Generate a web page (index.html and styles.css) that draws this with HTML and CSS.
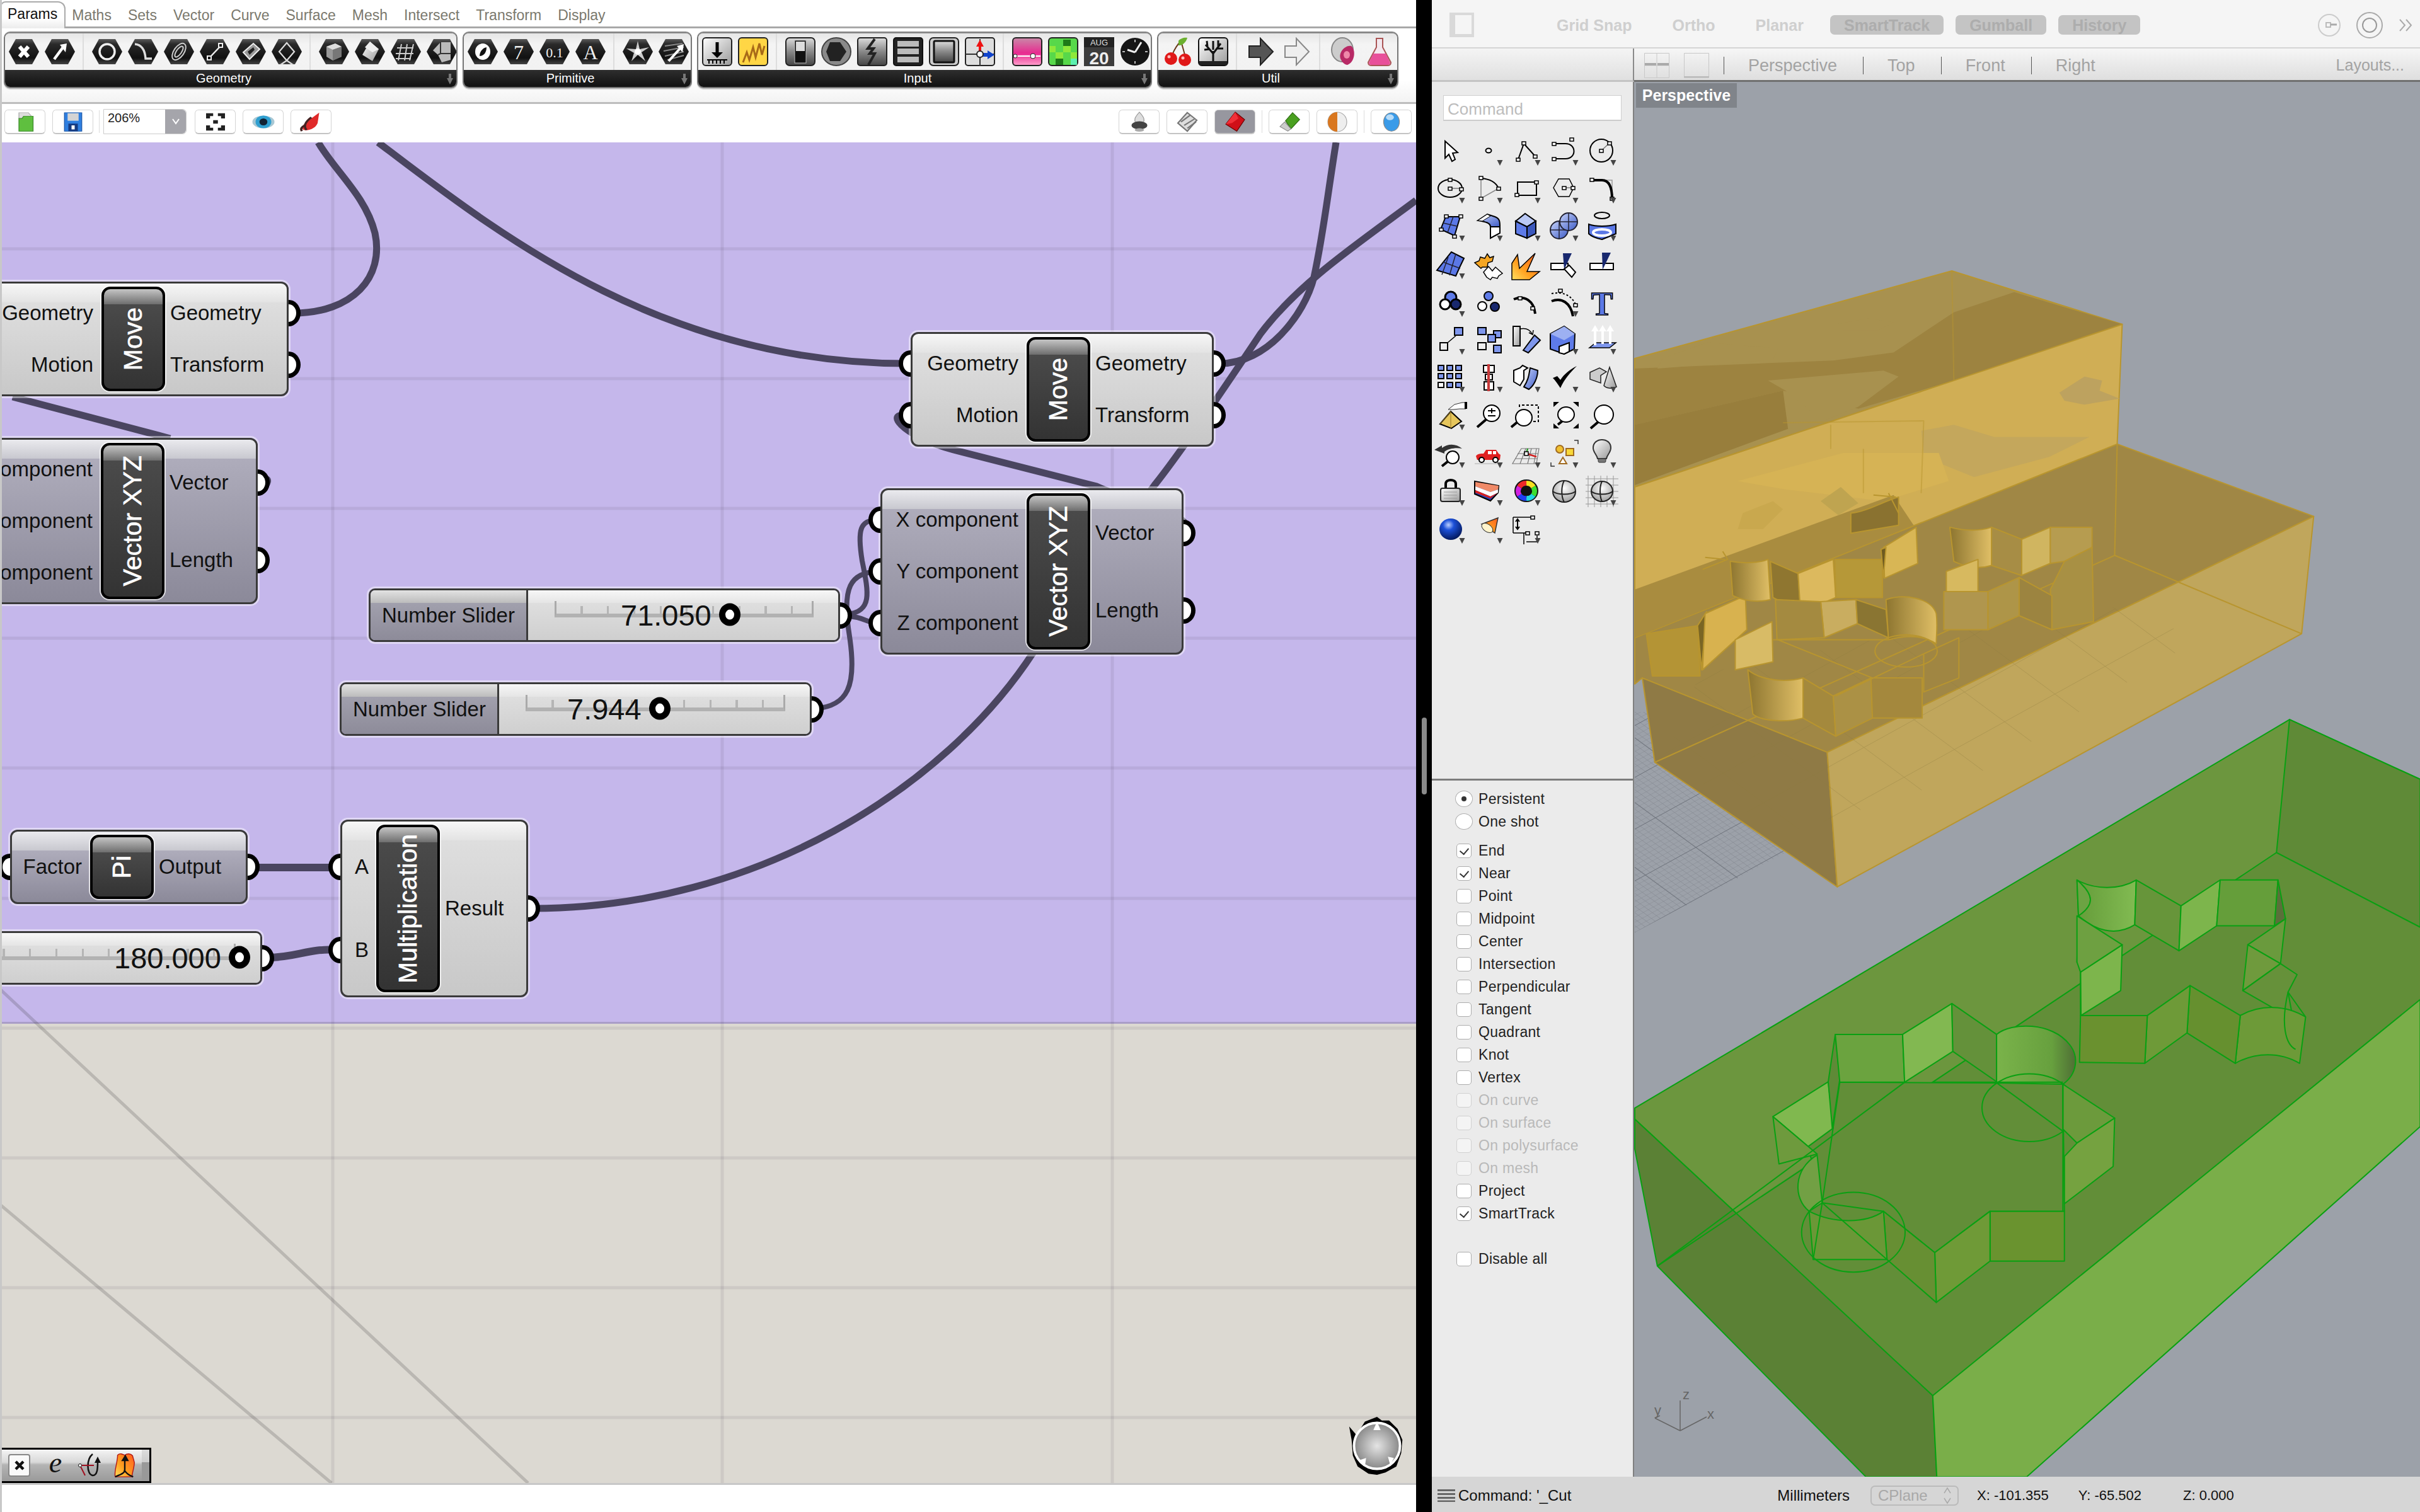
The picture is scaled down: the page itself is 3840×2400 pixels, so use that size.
FILE: index.html
```html
<!DOCTYPE html>
<html lang="en">
<head>
<meta charset="utf-8">
<title>Grasshopper and Rhino</title>
<link rel="stylesheet" href="styles.css">
</head>
<body>
<svg class="defs" width="0" height="0" aria-hidden="true">
  <defs>
    <path id="t" d="M43.5 44h9l-4.5 9z" fill="#454545"/>
    <path id="hexo" d="M11 1H37L48 21 37 41H11L0 21Z"/>
    <linearGradient id="gHex" x1="0" y1="0" x2="0" y2="1"><stop offset="0" stop-color="#5a5a5a"/><stop offset=".2" stop-color="#2a2a2a"/><stop offset=".75" stop-color="#111"/><stop offset="1" stop-color="#444"/></linearGradient>
    <linearGradient id="gGray" x1="0" y1="0" x2="0" y2="1"><stop offset="0" stop-color="#ddd"/><stop offset=".5" stop-color="#888"/><stop offset="1" stop-color="#444"/></linearGradient>
    <linearGradient id="gLight" x1="0" y1="0" x2="1" y2="1"><stop offset="0" stop-color="#fff"/><stop offset="1" stop-color="#999"/></linearGradient>
    <linearGradient id="gBlue" x1="0" y1="0" x2="1" y2="1"><stop offset="0" stop-color="#c8d4fa"/><stop offset="1" stop-color="#3e5cc8"/></linearGradient>
    <linearGradient id="gOrange" x1="1" y1="0" x2="0" y2="1"><stop offset="0" stop-color="#ff5a1f"/><stop offset=".6" stop-color="#ffa020"/><stop offset="1" stop-color="#ffe060"/></linearGradient>
    <linearGradient id="gPink" x1="0" y1="0" x2="0" y2="1"><stop offset="0" stop-color="#c98aa8"/><stop offset=".55" stop-color="#e82a90"/><stop offset="1" stop-color="#ffa0cc"/></linearGradient>
    <radialGradient id="gDial" cx=".5" cy=".5" r=".5"><stop offset="0" stop-color="#e4e4e4"/><stop offset="1" stop-color="#888"/></radialGradient>
    <radialGradient id="gBall" cx=".4" cy=".3" r=".7"><stop offset="0" stop-color="#bcd0ff"/><stop offset=".35" stop-color="#1c50d8"/><stop offset="1" stop-color="#041a60"/></radialGradient>
    <radialGradient id="gGlobe" cx=".5" cy=".35" r=".7"><stop offset="0" stop-color="#fff"/><stop offset="1" stop-color="#999"/></radialGradient>
    <linearGradient id="cyl1" x1="0" x2="1" y1="0" y2="0"><stop offset="0" stop-color="#7ab34a"/><stop offset=".7" stop-color="#67a03e"/><stop offset="1" stop-color="#4f6f35"/></linearGradient>
    <linearGradient id="cyl2" x1="0" x2="1" y1="0" y2="0"><stop offset="0" stop-color="#659c3a"/><stop offset="1" stop-color="#82bb52"/></linearGradient>
    <linearGradient id="cyl3" x1="0" x2="1" y1="0" y2="0"><stop offset="0" stop-color="#8d7530"/><stop offset="1" stop-color="#e0bf66"/></linearGradient>
    <pattern id="gridMajor" patternUnits="userSpaceOnUse" width="100" height="100" patternTransform="matrix(.8 -.44 .64 .47 2594 1480)"><path d="M0 0H100M0 0V100" stroke="#71767f" stroke-width="2.6" fill="none"/></pattern>
    <pattern id="gridMinor" patternUnits="userSpaceOnUse" width="10" height="10" patternTransform="matrix(.8 -.44 .64 .47 2594 1480)"><path d="M0 0H10M0 0V10" stroke="#868a92" stroke-width="1.4" fill="none"/></pattern>
    <pattern id="gridOver" patternUnits="userSpaceOnUse" width="100" height="100" patternTransform="matrix(1 -.69 .8 .74 0 0)"><path d="M0 0H100M0 0V100" stroke="#8f7a3f" stroke-width="1.6" fill="none" opacity=".45"/></pattern>
  </defs>
</svg>

<div class="gh">
  <nav class="gh-tabs">
    <span class="gh-tab gh-tab-on">Params</span>
    <span class="gh-tab">Maths</span><span class="gh-tab">Sets</span><span class="gh-tab">Vector</span><span class="gh-tab">Curve</span><span class="gh-tab">Surface</span><span class="gh-tab">Mesh</span><span class="gh-tab">Intersect</span><span class="gh-tab">Transform</span><span class="gh-tab">Display</span>
  </nav>

  <div class="ribbon">
    <section class="panel p-geo">
      <div class="panel-icons">
        <svg class="pi" viewBox="0 0 48 42"><use href="#hexo" fill="url(#gHex)"/><path d="M17 13 31 29M31 13 17 29" stroke="#fff" stroke-width="6" fill="none"/></svg>
        <svg class="pi" viewBox="0 0 48 42"><use href="#hexo" fill="url(#gHex)"/><path d="M15 33 29 14" stroke="#fff" stroke-width="4.5"/><path d="M24 10 35 8 33 22Z" fill="#fff"/></svg>
        <i class="pgap"></i>
        <svg class="pi" viewBox="0 0 48 42"><use href="#hexo" fill="url(#gHex)"/><ellipse cx="24" cy="21" rx="12" ry="12" fill="none" stroke="#eee" stroke-width="3.5"/></svg>
        <svg class="pi" viewBox="0 0 48 42"><use href="#hexo" fill="url(#gHex)"/><path d="M11 9C22 10 27 18 28 32H38" fill="none" stroke="#ddd" stroke-width="3.5"/></svg>
        <svg class="pi" viewBox="0 0 48 42"><use href="#hexo" fill="url(#gHex)"/><g fill="none" stroke="#ccc" stroke-width="2"><ellipse cx="24" cy="21" rx="8" ry="15" transform="rotate(35 24 21)"/><ellipse cx="24" cy="21" rx="4" ry="10" transform="rotate(35 24 21)"/></g></svg>
        <svg class="pi" viewBox="0 0 48 42"><use href="#hexo" fill="url(#gHex)"/><path d="M15 31 33 12" stroke="#eee" stroke-width="2.5"/><rect x="12" y="28" width="6" height="6" fill="#111" stroke="#eee" stroke-width="2"/><rect x="30" y="8" width="6" height="6" fill="#111" stroke="#eee" stroke-width="2"/></svg>
        <svg class="pi" viewBox="0 0 48 42"><use href="#hexo" fill="url(#gHex)"/><path d="M12 22 28 8 38 17 22 33Z" fill="#999" stroke="#eee" stroke-width="2"/><path d="M19 21 28 14 30 18 22 26Z" fill="#222"/></svg>
        <svg class="pi" viewBox="0 0 48 42"><use href="#hexo" fill="url(#gHex)"/><path d="M24 7 36 21 24 35 12 21ZM24 35 14 42M24 35 34 42" fill="none" stroke="#ddd" stroke-width="2.2"/></svg>
        <i class="pgap"></i>
        <svg class="pi" viewBox="0 0 48 42"><use href="#hexo" fill="url(#gHex)"/><path d="M12 13 26 8 36 13 36 29 22 35 12 29Z" fill="#999"/><path d="M12 13 26 8 36 13 22 18Z" fill="#ddd"/><path d="M22 18 36 13V29L22 35Z" fill="#777"/></svg>
        <svg class="pi" viewBox="0 0 48 42"><use href="#hexo" fill="url(#gHex)"/><path d="M24 5 38 17 28 36 12 26Z" fill="url(#gLight)"/><path d="M24 5 38 17 28 22 16 14Z" fill="#eee"/></svg>
        <svg class="pi" viewBox="0 0 48 42"><use href="#hexo" fill="url(#gHex)"/><path d="M10 15H36M8 24H36M8 32H32M17 9 12 35M26 9 22 35M36 9 30 35" stroke="#ccc" stroke-width="2" fill="none"/></svg>
        <svg class="pi" viewBox="0 0 48 42"><use href="#hexo" fill="url(#gHex)"/><path d="M10 19 22 6H38V34L24 38 18 26Z" fill="#bbb"/><path d="M22 6V24M22 24H38M22 24 18 26" stroke="#333" stroke-width="2"/></svg>
      </div>
      <h3 class="panel-title">Geometry<svg class="more" viewBox="0 0 10 18"><path d="M3 0h4v7h3l-5 10-5-10h3z" fill="#777"/></svg></h3>
    </section>
    <section class="panel p-pri">
      <div class="panel-icons">
        <svg class="pi" viewBox="0 0 48 42"><use href="#hexo" fill="url(#gHex)"/><ellipse cx="24" cy="21" rx="12" ry="13" fill="#fff"/><path d="M19 28C19 21 24 15 30 14 30 22 26 28 19 28Z" fill="#111"/></svg>
        <svg class="pi" viewBox="0 0 48 42"><use href="#hexo" fill="url(#gHex)"/><text class="hx-t" x="24" y="33" font-size="32">7</text></svg>
        <svg class="pi" viewBox="0 0 48 42"><use href="#hexo" fill="url(#gHex)"/><text class="hx-t" x="24" y="30" font-size="22">0.1</text></svg>
        <svg class="pi" viewBox="0 0 48 42"><use href="#hexo" fill="url(#gHex)"/><text class="hx-t" x="24" y="33" font-size="32">A</text></svg>
        <i class="pgap"></i>
        <svg class="pi" viewBox="0 0 48 42"><use href="#hexo" fill="url(#gHex)"/><path d="M24 4 27 17 42 14 30 22 36 36 24 26 14 36 18 23 6 16 21 17Z" fill="#ccc"/><circle cx="24" cy="21" r="5" fill="#fff"/></svg>
        <svg class="pi" viewBox="0 0 48 42"><use href="#hexo" fill="url(#gHex)"/><path d="M10 12 38 8M8 20 40 14M10 28 40 21M14 34 40 27" stroke="#888" stroke-width="2"/><path d="M16 36 34 16" stroke="#fff" stroke-width="4"/><path d="M29 12 40 9 38 22Z" fill="#fff"/></svg>
      </div>
      <h3 class="panel-title">Primitive<svg class="more" viewBox="0 0 10 18"><path d="M3 0h4v7h3l-5 10-5-10h3z" fill="#777"/></svg></h3>
    </section>
    <section class="panel p-inp">
      <div class="panel-icons">
        <svg class="pi pi-q" viewBox="0 0 48 46"><rect x="1" y="1" width="46" height="44" rx="5" fill="url(#gLight)" stroke="#222" stroke-width="2"/><path d="M24 8V26" stroke="#000" stroke-width="5"/><path d="M15 24H33L24 33Z" fill="#000"/><path d="M8 36H40M11 36V42M17 36V42M23 36V42M29 36V42M35 36V42" stroke="#000" stroke-width="2"/></svg>
        <svg class="pi pi-q" viewBox="0 0 48 46"><rect x="1" y="1" width="46" height="44" rx="5" fill="#ffd645" stroke="#222" stroke-width="2"/><path d="M8 40 14 24 18 36 24 16 28 32 34 10 38 28 42 14" fill="none" stroke="#a86a18" stroke-width="3"/></svg>
        <i class="pgap"></i>
        <svg class="pi pi-q" viewBox="0 0 48 46"><rect x="1" y="1" width="46" height="44" rx="6" fill="url(#gGray)" stroke="#222" stroke-width="2"/><rect x="15" y="5" width="18" height="36" fill="#111" stroke="#bbb"/><rect x="17" y="7" width="14" height="15" fill="#ddd"/></svg>
        <svg class="pi pi-q" viewBox="0 0 48 46"><ellipse cx="24" cy="23" rx="23" ry="22" fill="#8a8a8a" stroke="#444" stroke-width="2"/><path d="M14 8H30L40 23 30 38H14L8 23Z" fill="#222"/></svg>
        <svg class="pi pi-q" viewBox="0 0 48 46"><rect x="1" y="1" width="46" height="44" rx="4" fill="url(#gGray)" stroke="#222" stroke-width="2"/><path d="M28 3 17 18H26L20 26H28L18 44" fill="none" stroke="#222" stroke-width="4"/></svg>
        <svg class="pi pi-q" viewBox="0 0 48 46"><rect x="1" y="1" width="46" height="44" rx="4" fill="#222" stroke="#111" stroke-width="2"/><rect x="7" y="6" width="34" height="9" fill="#bbb"/><rect x="7" y="18" width="34" height="9" fill="#bbb"/><rect x="7" y="31" width="34" height="9" fill="#bbb"/></svg>
        <svg class="pi pi-q" viewBox="0 0 48 46"><rect x="1" y="1" width="46" height="44" rx="6" fill="#ccc" stroke="#222" stroke-width="2"/><rect x="8" y="6" width="32" height="34" rx="2" fill="url(#gGray)" stroke="#111" stroke-width="3"/></svg>
        <svg class="pi pi-q" viewBox="0 0 48 46"><rect x="1" y="1" width="46" height="44" rx="4" fill="#ddd" stroke="#222" stroke-width="2"/><path d="M24 3V46M1 27H46" stroke="#333" stroke-width="2"/><path d="M24 4 30 15H26V26H22V15H18Z" fill="#e11"/><path d="M47 28 36 35V31H24V25H36V21Z" fill="#14c"/><circle cx="24" cy="27" r="5" fill="#fff" stroke="#222" stroke-width="2"/></svg>
        <i class="pgap"></i>
        <svg class="pi pi-q" viewBox="0 0 48 46"><rect x="1" y="1" width="46" height="44" rx="5" fill="url(#gPink)" stroke="#222" stroke-width="2"/><path d="M3 30H45" stroke="#fff" stroke-width="2"/><circle cx="5" cy="30" r="3" fill="#fff" stroke="#222"/><circle cx="33" cy="30" r="4" fill="#fff" stroke="#222"/></svg>
        <svg class="pi pi-q" viewBox="0 0 48 46"><rect x="1" y="1" width="46" height="44" rx="5" fill="#57d84a" stroke="#222" stroke-width="2"/><path d="M2 14H12V24H2ZM24 14H36V24H24ZM12 24H24V34H12ZM36 24H46V34H36Z" fill="#8fe83a"/><path d="M12 34H24V44H12ZM24 4H36V14H24Z" fill="#1e7a18"/><path d="M36 34H46V44H36Z" fill="#5cf0b0"/></svg>
        <svg class="pi pi-q" viewBox="0 0 48 46"><rect width="48" height="46" fill="#222"/><rect y="16" width="48" height="30" fill="#3c3c3c"/><text class="cal-m" x="24" y="13">AUG</text><text class="cal-d" x="24" y="43">20</text></svg>
        <svg class="pi pi-q" viewBox="0 0 48 46"><ellipse cx="24" cy="23" rx="23" ry="22" fill="#161616"/><path d="M24 24 34 8M24 24 12 20" stroke="#eee" stroke-width="3"/><path d="M24 4V8M24 38V42M4 23H8M40 23H44" stroke="#bbb" stroke-width="2"/></svg>
      </div>
      <h3 class="panel-title">Input<svg class="more" viewBox="0 0 10 18"><path d="M3 0h4v7h3l-5 10-5-10h3z" fill="#777"/></svg></h3>
    </section>
    <section class="panel p-uti">
      <div class="panel-icons">
        <svg class="pi pi-q" viewBox="0 0 48 46"><path d="M16 28C20 18 24 12 30 6M36 28C34 20 32 14 30 6" fill="none" stroke="#6a3a1a" stroke-width="2"/><path d="M26 6C28 2 36 0 40 1 38 8 32 14 26 13Z" fill="#6cb030"/><circle cx="14" cy="34" r="10" fill="#e01818"/><circle cx="36" cy="36" r="10" fill="#e01818"/><circle cx="11" cy="31" r="2.5" fill="#fbb"/><circle cx="33" cy="33" r="2.5" fill="#fbb"/></svg>
        <svg class="pi pi-q" viewBox="0 0 48 46"><rect x="1" y="1" width="46" height="44" rx="5" fill="url(#gLight)" stroke="#111" stroke-width="2"/><path d="M24 42V22M24 26 12 12M24 26 36 10M24 20V6M18 19 10 20M30 18 40 18M15 15 14 6M32 14 32 5" stroke="#111" stroke-width="3"/><rect x="2" y="38" width="44" height="6" fill="#222"/></svg>
        <i class="pgap"></i>
        <svg class="pi pi-q" viewBox="0 0 48 46"><path d="M6 14H24V2L44 23 24 44V32H6Z" fill="#555" stroke="#222" stroke-width="2"/></svg>
        <svg class="pi pi-q" viewBox="0 0 48 46"><path d="M6 14H24V2L44 23 24 44V32H6Z" fill="#eee" stroke="#888" stroke-width="2"/></svg>
        <i class="pgap"></i>
        <svg class="pi pi-q" viewBox="0 0 48 46"><ellipse cx="22" cy="20" rx="17" ry="19" fill="#ccc" stroke="#888" stroke-width="2"/><path d="M20 36C14 26 26 12 36 14 44 20 42 40 30 44 26 44 22 40 20 36Z" fill="#b82a66"/><ellipse cx="29" cy="28" rx="5" ry="6" fill="#e8a"/></svg>
        <svg class="pi pi-q" viewBox="0 0 48 46"><path d="M19 2H29V16L42 40C42 44 40 45 36 45H12C8 45 6 44 6 40L19 16Z" fill="#f3e8ee" stroke="#a55" stroke-width="2"/><path d="M14 26H34L41 41C40 44 38 44 36 44H12C10 44 8 44 7 41Z" fill="#e8509a"/></svg>
      </div>
      <h3 class="panel-title">Util<svg class="more" viewBox="0 0 10 18"><path d="M3 0h4v7h3l-5 10-5-10h3z" fill="#777"/></svg></h3>
    </section>
  </div>

  <div class="canvas-bar">
    <button class="tb-btn"><svg viewBox="0 0 40 36" preserveAspectRatio="none"><path d="M12 2H24L28 8V12H12Z" fill="#ddd" stroke="#aaa"/><path d="M12 12H16L18 8H30V34H12Z" fill="#5fbf3f" stroke="#3a8a2a"/></svg></button>
    <button class="tb-btn"><svg viewBox="0 0 40 36" preserveAspectRatio="none"><path d="M9 2H31V34H9Z" fill="#2f7fe0" stroke="#1a55a5"/><rect x="13" y="3" width="14" height="13" fill="#d4d4d4"/><rect x="14" y="21" width="12" height="13" fill="#163a80"/><rect x="18" y="24" width="4" height="7" fill="#fff"/></svg></button>
    <i class="tb-sep tb-sep-l"></i>
    <div class="zoom-sel"><span class="zoom-val">206%</span><span class="zoom-arrow"><svg viewBox="0 0 14 10" width="14" height="10"><path d="M2 1 7 8 12 1" fill="none" stroke="#fff" stroke-width="2"/></svg></span></div>
    <button class="tb-btn"><svg viewBox="0 0 40 36" preserveAspectRatio="none"><path d="M8 3H17V8H13V12H8ZM23 3H32V12H27V8H23ZM8 24H13V28H17V33H8ZM27 24H32V33H23V28H27Z" fill="#222"/><rect x="17" y="15" width="6" height="6" fill="#222"/></svg></button>
    <button class="tb-btn"><svg viewBox="0 0 40 36" preserveAspectRatio="none"><ellipse cx="20" cy="18" rx="14" ry="11" fill="#a9c8d4"/><ellipse cx="20" cy="18" rx="10" ry="11" fill="#2f9fd0"/><ellipse cx="20" cy="18" rx="5" ry="6" fill="#123"/></svg></button>
    <button class="tb-btn"><svg viewBox="0 0 40 36" preserveAspectRatio="none"><path d="M10 32C6 26 12 20 18 14L30 2 28 20C26 28 18 34 10 32Z" fill="#e02a2a"/><path d="M14 32C10 26 12 18 20 10" fill="none" stroke="#422" stroke-width="3"/><path d="M8 34C6 30 8 26 12 24" fill="none" stroke="#422" stroke-width="3"/></svg></button>
    <div class="tb-right">
      <button class="tb-btn"><svg viewBox="0 0 40 36" preserveAspectRatio="none"><path d="M20 1C14 10 13 14 15 20H25C27 14 26 10 20 1Z" fill="#ddd" stroke="#999"/><ellipse cx="20" cy="24" rx="10" ry="7" fill="#444"/><ellipse cx="20" cy="32" rx="6" ry="3" fill="#aaa"/></svg></button>
      <button class="tb-btn"><svg viewBox="0 0 40 36" preserveAspectRatio="none"><path d="M20 2 32 15 20 34 8 20Z" fill="#ddd" stroke="#777" stroke-width="2"/><path d="M12 18 24 6M16 24 29 13M20 29 31 18" stroke="#777" stroke-width="2"/></svg></button>
      <button class="tb-btn tb-on"><svg viewBox="0 0 40 36" preserveAspectRatio="none"><path d="M20 1 32 14 22 34 8 22Z" fill="#d00f18" stroke="#600"/><path d="M20 1 24 12 16 20 8 22Z" fill="#f03038"/></svg></button>
      <i class="tb-sep"></i>
      <button class="tb-btn"><svg viewBox="0 0 40 36" preserveAspectRatio="none"><path d="M24 2 33 14 22 30 15 16Z" fill="#4aa020" stroke="#2a6a10"/><path d="M14 18 22 30 18 34 8 26Z" fill="#ccc" stroke="#888"/></svg></button>
      <button class="tb-btn"><svg viewBox="0 0 40 36" preserveAspectRatio="none"><ellipse cx="20" cy="18" rx="12" ry="17" fill="#eee" stroke="#aaa"/><path d="M20 1C13 1 8 9 8 18S13 35 20 35Z" fill="#d9771f"/></svg></button>
      <i class="tb-sep"></i>
      <button class="tb-btn"><svg viewBox="0 0 40 36" preserveAspectRatio="none"><ellipse cx="20" cy="18" rx="10" ry="16" fill="#3a9be8" stroke="#888"/><ellipse cx="18" cy="10" rx="5" ry="5" fill="#b8dcf8"/></svg></button>
    </div>
  </div>

  <main class="canvas">
    <svg class="wires" viewBox="0 226 2247 2128">
      <g class="gridl">
        <path d="M528 226V2354M1146 226V2354M1765 226V2354"/>
        <path d="M0 395H2247M0 601H2247M0 807H2247M0 1013H2247M0 1219H2247M0 1426H2247M0 1632H2247M0 1838H2247M0 2044H2247M0 2250H2247"/>
      </g>
      <path class="diag" d="M0 1570 838 2354M0 1912 526 2354"/>
      <g class="wire">
        <path d="M465 497C560 497 610 440 595 370 580 310 530 270 505 226"/>
        <path d="M600 226C790 370 1050 577 1438 577"/>
        <path d="M20 630 270 696"/>
        <path d="M1440 662C1405 650 1425 690 1513 714L1740 772C1800 800 1905 815 1880 850"/>
        <path d="M845 1442C1200 1442 1500 1250 1640 1035L1832 770C1880 710 1960 590 2000 530 2060 450 2150 390 2247 318"/>
        <path d="M1936 577C2010 577 2070 500 2085 440 2100 370 2105 320 2120 226"/>
        <path class="thin" d="M1345 975C1385 970 1378 940 1368 890 1360 840 1365 826 1392 825"/>
        <path class="thin" d="M1294 1125C1345 1120 1360 1090 1348 1010 1335 930 1350 910 1392 907"/>
        <path class="thin" d="M1340 978C1370 978 1375 989 1392 989"/>
        <path d="M405 763C435 752 425 770 412 780"/>
        <path class="thick" d="M400 1377H532"/>
        <path class="thick" d="M425 1520C470 1520 490 1505 532 1508"/>
      </g>
    </svg>

    <article class="node move n-move1">
      <div class="col-in col-move"><div class="row">Geometry</div><div class="row">Motion</div></div>
      <div class="pill"><span>Move</span></div>
      <div class="col-out"><div class="row">Geometry<b class="port port-r"></b></div><div class="row">Transform<b class="port port-r"></b></div></div>
    </article>
    <article class="node vec dark n-vec1">
      <div class="col-in col-vec"><div class="row">X component</div><div class="row">Y component</div><div class="row">Z component</div></div>
      <div class="pill"><span>Vector XYZ</span></div>
      <div class="col-out"><div class="row">Vector<b class="port port-r"></b></div><div class="row">Length<b class="port port-r"></b></div></div>
    </article>
    <article class="node move n-move2">
      <div class="col-in col-move"><div class="row"><b class="port port-l"></b>Geometry</div><div class="row"><b class="port port-l"></b>Motion</div></div>
      <div class="pill"><span>Move</span></div>
      <div class="col-out"><div class="row">Geometry<b class="port port-r"></b></div><div class="row">Transform<b class="port port-r"></b></div></div>
    </article>
    <article class="node vec dark n-vec2">
      <div class="col-in col-vec"><div class="row"><b class="port port-l"></b>X component</div><div class="row"><b class="port port-l"></b>Y component</div><div class="row"><b class="port port-l"></b>Z component</div></div>
      <div class="pill"><span>Vector XYZ</span></div>
      <div class="col-out"><div class="row">Vector<b class="port port-r"></b></div><div class="row">Length<b class="port port-r"></b></div></div>
    </article>
    <article class="node pi-node dark n-pi">
      <div class="col-in col-pi"><div class="row"><b class="port port-l"></b>Factor</div></div>
      <div class="pill"><span>Pi</span></div>
      <div class="col-out"><div class="row">Output<b class="port port-r"></b></div></div>
    </article>
    <article class="node mult n-mult">
      <div class="col-in col-mult"><div class="row"><b class="port port-l"></b>A</div><div class="row"><b class="port port-l"></b>B</div></div>
      <div class="pill"><span>Multiplication</span></div>
      <div class="col-out"><div class="row">Result<b class="port port-r"></b></div></div>
    </article>

    <article class="slider n-s1">
      <div class="s-label">Number Slider</div>
      <div class="s-track"><i class="s-rail"></i><div class="s-read r1"><span>71.050</span><i class="knob"></i></div></div>
      <b class="port port-r"></b>
    </article>
    <article class="slider n-s2">
      <div class="s-label">Number Slider</div>
      <div class="s-track"><i class="s-rail"></i><div class="s-read r2"><span>7.944</span><i class="knob"></i></div></div>
      <b class="port port-r"></b>
    </article>
    <article class="slider n-s3">
      <div class="s-label">Number Slider</div>
      <div class="s-track"><i class="s-rail"></i><div class="s-read r3"><span>180.000</span><i class="knob"></i></div></div>
      <b class="port port-r"></b>
    </article>

    <div class="widget">
      <button class="w-x"><svg viewBox="0 0 20 20" width="20" height="20"><path d="M4 4 16 16M16 4 4 16" stroke="#111" stroke-width="4.5"/></svg></button>
      <svg class="w-i w-first" viewBox="0 0 40 40"><text class="w-e" x="20" y="31">e</text></svg>
      <svg class="w-i" viewBox="0 0 40 40"><path d="M24 2C14 10 14 34 24 36 32 36 32 24 32 14" fill="none" stroke="#111" stroke-width="2.5"/><path d="M27 16 32 6 37 16Z" fill="#111"/><path d="M4 20H26M4 20 12 36" stroke="#a01020" stroke-width="2"/><circle cx="4" cy="20" r="2.5" fill="#fff" stroke="#111"/></svg>
      <svg class="w-i" viewBox="0 0 40 42"><path d="M8 4C12 0 16 2 20 4 24 1 30 1 33 5L36 16C36 24 32 34 32 40H4C2 30 8 16 8 4Z" fill="url(#gOrange)" stroke="#b01818" stroke-width="1.5"/><path d="M20 6V28C20 34 14 36 4 40M20 30C24 36 28 38 34 40" fill="none" stroke="#111" stroke-width="2.5"/><path d="M14 14 21 3 27 14Z" fill="#111"/></svg>
      <i class="w-end"></i>
    </div>
    <svg class="dial" viewBox="0 0 100 100"><path d="M50 2 58 8 70 8 84 22 92 40 90 62 82 84 64 94 50 98 36 96 18 84 10 66 8 40 4 18 16 32 30 10Z" fill="#000"/><circle cx="50" cy="50" r="38" fill="url(#gDial)" stroke="#fff" stroke-width="4"/><path d="M50 10 56 24 44 24ZM20 74 32 70 30 84ZM78 70 68 68 72 82Z" fill="#fff"/></svg>
  </main>
  <div class="gh-foot"></div>
</div>

<div class="divider"><i class="handle"></i></div>

<div class="rh">
  <header class="rh-top">
    <i class="side-tog"></i>
    <span class="tg tg-first">Grid Snap</span><span class="tg">Ortho</span><span class="tg">Planar</span>
    <span class="tg tg-on">SmartTrack</span><span class="tg tg-on tg-next">Gumball</span><span class="tg tg-on tg-next">History</span>
    <div class="rh-top-right">
      <svg viewBox="0 0 36 36" width="36" height="36"><circle cx="18" cy="18" r="17" fill="none" stroke="#ccc" stroke-width="2"/><rect x="13" y="14" width="7" height="7" fill="none" stroke="#bbb" stroke-width="2"/><path d="M20 17H30" stroke="#aaa" stroke-width="3"/></svg>
      <svg viewBox="0 0 42 42" width="42" height="42"><circle cx="21" cy="21" r="20" fill="none" stroke="#aaa" stroke-width="2"/><circle cx="21" cy="21" r="11" fill="none" stroke="#999" stroke-width="2"/></svg>
      <svg viewBox="0 0 24 22" width="24" height="22"><path d="M2 2 10 11 2 20M12 2 20 11 12 20" fill="none" stroke="#aaa" stroke-width="2"/></svg>
    </div>
  </header>
  <div class="rh-row">
    <div class="rh-row-side"></div>
    <nav class="vp-tabs">
      <svg class="vt-ic" viewBox="0 0 40 40" width="40" height="40"><path d="M.5.5H39.5V39.5H.5ZM20 0V40M0 20H40" fill="none" stroke="#c8c8c8"/><path d="M1 18H19M21 18H39" stroke="#aaa" stroke-width="4"/></svg>
      <svg class="vt-ic" viewBox="0 0 40 40" width="40" height="40"><path d="M.5.5H39.5V39.5H.5Z" fill="none" stroke="#c8c8c8"/><path d="M0 38H40" stroke="#bbb" stroke-width="2"/></svg>
      <span class="vt">Perspective</span><span class="vt">Top</span><span class="vt">Front</span><span class="vt">Right</span>
      <span class="vt-lay">Layouts...</span>
    </nav>
  </div>
  <div class="rh-main">
    <aside class="side">
      <div class="cmd">Command</div>
      <div class="tools">
        <svg viewBox="0 0 60 60"><path class="w" d="M21 14V41L27 35 32 46 37 43 33 33 41 32Z"/></svg>
        <svg viewBox="0 0 60 60"><ellipse class="w" cx="30" cy="29" rx="4.5" ry="3.5"/><use href="#t"/></svg>
        <svg viewBox="0 0 60 60"><path class="k" d="M17 43 26 18 44 38"/><rect class="s" x="14" y="41" width="6" height="5"/><rect class="s" x="23" y="15" width="6" height="5"/><rect class="s" x="41" y="36" width="6" height="5"/><use href="#t"/></svg>
        <svg viewBox="0 0 60 60"><path class="k" d="M16 18H32C50 18 50 42 32 42H16"/><rect class="s" x="11" y="16" width="6" height="5"/><rect class="s" x="39" y="9" width="6" height="5"/><rect class="s" x="11" y="40" width="6" height="5"/><use href="#t"/></svg>
        <svg viewBox="0 0 60 60"><circle class="k" cx="29" cy="29" r="18"/><path d="M29 29 42 17" stroke="#777" stroke-width="1.5"/><rect class="s" x="26" y="27" width="6" height="5"/><rect class="s" x="39" y="15" width="6" height="5"/><use href="#t"/></svg>

        <svg viewBox="0 0 60 60"><ellipse class="k" cx="29" cy="29" rx="19" ry="14"/><path d="M29 29H47" stroke="#777" stroke-width="1.5"/><rect class="s" x="26" y="13" width="6" height="5"/><rect class="s" x="26" y="27" width="6" height="5"/><rect class="s" x="44" y="28" width="6" height="5"/><use href="#t"/></svg>
        <svg viewBox="0 0 60 60"><path d="M18 13V45L46 29" fill="none" stroke="#888" stroke-width="1.5"/><path class="k" d="M18 13C32 14 42 20 46 29"/><rect class="s" x="15" y="10" width="6" height="5"/><rect class="s" x="43" y="27" width="6" height="5"/><rect class="s" x="15" y="43" width="6" height="5"/><use href="#t"/></svg>
        <svg viewBox="0 0 60 60"><rect class="k" x="16" y="19" width="30" height="21"/><rect class="s" x="12" y="37" width="6" height="5"/><rect class="s" x="43" y="17" width="6" height="5"/><use href="#t"/></svg>
        <svg viewBox="0 0 60 60"><path class="k k1" d="M13 28 21 14H38L45 28 38 42H21Z"/><path d="M30 28H44" stroke="#777" stroke-width="1.5"/><rect class="s" x="27" y="26" width="6" height="5"/><rect class="s" x="41" y="26" width="6" height="5"/><use href="#t"/></svg>
        <svg viewBox="0 0 60 60"><path d="M14 16H46V46" fill="none" stroke="#999" stroke-width="1.5"/><path class="k k3" d="M14 16H30C42 16 46 28 46 46"/><rect class="s" x="11" y="13" width="6" height="5"/><rect class="s" x="43" y="43" width="6" height="5"/><use href="#t"/></svg>

        <svg viewBox="0 0 60 60"><path class="b" d="M22 14H45L36 44 14 34Z"/><path d="M34 14 25 39M18 24 40 29" stroke="#223" stroke-width="1.5"/><rect class="s" x="20" y="11" width="6" height="5"/><rect class="s" x="43" y="11" width="6" height="5"/><rect class="s" x="33" y="43" width="6" height="5"/><rect class="s" x="12" y="32" width="6" height="5"/><use href="#t"/></svg>
        <svg viewBox="0 0 60 60"><path d="M13 20 28 10 40 14C48 17 48 22 48 30L33 30C33 24 26 22 13 20Z" fill="url(#gBlue)" stroke="#000" stroke-width="2"/><path class="w" d="M33 30H48V40L33 48Z"/><path d="M13 20 28 10 33 13 20 21Z" fill="#fff" stroke="#000"/><use href="#t"/></svg>
        <svg viewBox="0 0 60 60"><path d="M13 21 28 9 45 21 31 30Z" fill="#b9c8f5" stroke="#000" stroke-width="2"/><path d="M13 21 31 30V48L13 41Z" fill="#5e7be8" stroke="#000" stroke-width="2"/><path d="M31 30 45 21V41L31 48Z" fill="#3b58bd" stroke="#000" stroke-width="2"/><use href="#t"/></svg>
        <svg viewBox="0 0 60 60"><circle cx="22" cy="35" r="14" fill="url(#gBlue)" stroke="#223" stroke-width="2"/><path d="M22 21V49M8 35H36" stroke="#223" stroke-width="1.5"/><circle cx="37" cy="22" r="14" fill="url(#gBlue)" stroke="#223" stroke-width="2"/><path d="M37 8V36M23 22H51" stroke="#223" stroke-width="1.5"/><use href="#t"/></svg>
        <svg viewBox="0 0 60 60"><ellipse class="k" cx="30" cy="12" rx="12" ry="5"/><path class="b" d="M9 26C20 30 40 30 52 26V41C40 46 30 50 30 50 20 48 14 46 9 41Z"/><ellipse cx="30" cy="39" rx="14" ry="5" fill="none" stroke="#fff" stroke-width="4"/><use href="#t"/></svg>

        <svg viewBox="0 0 60 60"><path class="b" d="M8 39 31 10 51 20C46 30 44 34 38 48Z"/><path d="M18 26 45 36M26 18 16 46M38 13 28 47" stroke="#223" stroke-width="1.5" fill="none"/><use href="#t"/></svg>
        <svg viewBox="0 0 60 60"><path d="M30 33 36 40 41 34 52 44 46 48 44 52 36 50 33 54 27 50 22 42Z" fill="#fff" stroke="#000" stroke-width="1.5"/><path d="M8 27 15 24 17 18 24 20 28 13 32 19 38 17 36 25 29 27 28 34 20 34 18 36Z" fill="#f5a623" stroke="#000" stroke-width="1.5"/></svg>
        <svg viewBox="0 0 60 60"><path d="M7 54V28L16 14 19 36 44 12 31 41 51 41 35 54Z" fill="url(#gOrange)" stroke="#000" stroke-width="1.5"/></svg>
        <svg viewBox="0 0 60 60"><rect class="w" x="9" y="28" width="27" height="10"/><path d="M28 12H42L30 38Z" fill="#18286e"/><path class="w" d="M30 37 38 31 48 42 42 50Z"/></svg>
        <svg viewBox="0 0 60 60"><rect class="w" x="11" y="28" width="37" height="10"/><path d="M30 11H44L31 38Z" fill="#18286e"/></svg>

        <svg viewBox="0 0 60 60"><circle cx="30" cy="22" r="9" fill="#5e7be8" stroke="#000" stroke-width="3"/><circle cx="21" cy="33" r="8" fill="#fff" stroke="#000" stroke-width="3"/><circle cx="38" cy="33" r="8" fill="#18286e" stroke="#000" stroke-width="3"/><use href="#t"/></svg>
        <svg viewBox="0 0 60 60"><circle cx="30" cy="20" r="7" fill="#5e7be8" stroke="#000" stroke-width="2"/><circle cx="20" cy="36" r="7" fill="#fff" stroke="#000" stroke-width="2"/><circle cx="40" cy="37" r="7" fill="#18286e" stroke="#000" stroke-width="2"/></svg>
        <svg viewBox="0 0 60 60"><path class="k k3" d="M10 25C28 18 42 28 44 48"/><rect class="s" x="17" y="21" width="6" height="5"/><rect class="s" x="37" y="37" width="6" height="5"/></svg>
        <svg viewBox="0 0 60 60"><path class="k k3" d="M10 28C26 22 40 30 44 52"/><path d="M10 16C30 12 44 20 50 38" fill="none" stroke="#000" stroke-width="2" stroke-dasharray="3 3"/><rect class="s" x="21" y="9" width="6" height="5"/><rect class="s" x="45" y="32" width="6" height="5"/><use href="#t"/></svg>
        <svg viewBox="0 0 60 60"><text class="ic-t" x="30" y="50">T</text></svg>

        <svg viewBox="0 0 60 60"><path class="k k1" d="M25 34 38 23"/><rect x="13" y="34" width="12" height="12" fill="#eee" stroke="#000" stroke-width="2"/><rect x="36" y="10" width="13" height="12" fill="#7e96ec" stroke="#000" stroke-width="2"/><use href="#t"/></svg>
        <svg viewBox="0 0 60 60"><rect x="13" y="10" width="13" height="11" fill="#7e96ec" stroke="#000" stroke-width="2"/><rect x="13" y="34" width="13" height="11" fill="#eee" stroke="#000" stroke-width="2"/><rect x="38" y="15" width="12" height="11" fill="#7e96ec" stroke="#000" stroke-width="2"/><rect x="29" y="21" width="12" height="12" fill="#7e96ec" stroke="#000" stroke-width="2"/><rect x="38" y="38" width="12" height="12" fill="#7e96ec" stroke="#000" stroke-width="2"/></svg>
        <svg viewBox="0 0 60 60"><rect x="9" y="8" width="11" height="31" fill="url(#gLight)" stroke="#000" stroke-width="2"/><path d="M25 46 43 22 52 30 33 50Z" fill="#7e96ec" stroke="#000" stroke-width="2"/><path class="k k1" d="M20 12C30 10 36 14 39 20"/><path class="k k1" d="M34 18 40 21 41 14"/></svg>
        <svg viewBox="0 0 60 60"><path d="M8 20 30 8 47 20 46 44 30 52 8 44Z" fill="#5e7be8" stroke="#000" stroke-width="2"/><path d="M8 20 30 8 47 20 30 30Z" fill="#9db0f2"/><path d="M22 40 38 34V48L30 52 22 50Z" fill="#fff" stroke="#000" stroke-width="2"/><use href="#t"/></svg>
        <svg viewBox="0 0 60 60"><path d="M10 42 20 34H52L42 42Z" fill="#7e96ec" stroke="#000" stroke-width="1.5"/><path d="M17 38V16H13L19 6 25 16H21V38ZM29 36V16H25L31 6 37 16H33V36ZM41 36V16H37L43 6 49 16H45V36Z" fill="#fff"/><use href="#t"/></svg>

        <svg viewBox="0 0 60 60"><g class="arr"><rect x="10" y="10" width="9" height="8"/><rect x="24" y="10" width="9" height="8"/><rect x="38" y="10" width="9" height="8"/><rect x="10" y="23" width="9" height="8"/><rect x="24" y="23" width="9" height="8"/><rect x="38" y="23" width="9" height="8"/><rect class="wf" x="10" y="37" width="9" height="8"/><rect x="24" y="37" width="9" height="8"/><rect x="38" y="37" width="9" height="8"/></g><use href="#t"/></svg>
        <svg viewBox="0 0 60 60"><rect class="w" x="22" y="10" width="17" height="11"/><rect class="w" x="25" y="24" width="11" height="9"/><rect class="w" x="23" y="36" width="15" height="13"/><rect x="28" y="8" width="4" height="43" fill="#c83a3a"/><use href="#t"/></svg>
        <svg viewBox="0 0 60 60"><path class="w" d="M10 18 20 14 24 10 32 14 26 18V32L20 42 10 36Z"/><path d="M26 44C34 32 34 24 36 14L48 18C48 30 42 42 34 48Z" fill="url(#gBlue)" stroke="#000" stroke-width="2"/><use href="#t"/></svg>
        <svg viewBox="0 0 60 60"><path d="M12 30 19 27 24 33C30 24 38 17 50 11 40 21 30 32 24 46 20 40 16 34 12 30Z" fill="#000"/><use href="#t"/></svg>
        <svg viewBox="0 0 60 60"><path d="M11 21 26 14 37 20 28 26 28 38 11 32Z" fill="#ccc" stroke="#222" stroke-width="1.5"/><path d="M42 13 53 44C46 48 36 46 33 42Z" fill="url(#gLight)" stroke="#222" stroke-width="1.5"/><use href="#t"/></svg>

        <svg viewBox="0 0 60 60"><path d="M13 43 30 23 47 39 31 50Z" fill="#e6c65c" stroke="#000" stroke-width="2"/><path d="M30 23V50M30 23 13 43" stroke="#9a7a2a"/><path d="M26 20 36 12 48 9H54V19H44L34 20Z" fill="#fff" stroke="#333" stroke-width="1"/><rect x="52" y="8" width="4" height="11" fill="#000"/><use href="#t"/></svg>
        <svg viewBox="0 0 60 60"><path class="k k3" d="M12 48 26 36"/><ellipse class="w" cx="35" cy="26" rx="13" ry="13"/><path d="M29 22H41M35 18V26M29 30H41" stroke="#000" stroke-width="2"/></svg>
        <svg viewBox="0 0 60 60"><path class="k k3" d="M6 48 18 38"/><ellipse class="w" cx="26" cy="33" rx="13" ry="13"/><path d="M19 16V13H49V39H38" fill="none" stroke="#000" stroke-width="2" stroke-dasharray="4 3"/></svg>
        <svg viewBox="0 0 60 60"><path class="k k3" d="M20 44 30 36"/><ellipse class="w" cx="33" cy="28" rx="13" ry="12"/><path d="M13 8H22L13 16ZM53 8H44L53 16ZM13 50H22L13 42ZM53 50H44L53 42Z" fill="#000"/></svg>
        <svg viewBox="0 0 60 60"><path class="k k3" d="M12 50 26 38"/><ellipse class="w" cx="33" cy="28" rx="15" ry="15"/></svg>

        <svg viewBox="0 0 60 60"><path class="k k3" d="M16 50 26 42"/><ellipse class="w" cx="33" cy="36" rx="10" ry="10"/><path d="M4 24 16 17 16 21C26 14 38 14 48 22 38 20 26 22 20 27L20 30Z" fill="#333"/><use href="#t"/></svg>
        <svg viewBox="0 0 60 60"><path d="M10 34C12 30 18 30 22 30L26 24H42L46 30 49 32 48 40H12Z" fill="#e02020"/><rect x="29" y="26" width="6" height="5" fill="#fff"/><rect x="37" y="26" width="5" height="5" fill="#fff"/><circle cx="19" cy="40" r="4" fill="#fff" stroke="#000" stroke-width="2"/><circle cx="41" cy="40" r="4" fill="#fff" stroke="#000" stroke-width="2"/><path d="M8 46H52" stroke="#aaa"/><use href="#t"/></svg>
        <svg viewBox="0 0 60 60"><path d="M22 22H50L46 46H8ZM29 22 20 46M38 22 32 46M46 22 42 46M16 30H48M12 38H47" fill="none" stroke="#777" stroke-width="1.2"/><path d="M30 30 32 22" stroke="#2a9a2a" stroke-width="2.5"/><path d="M30 30 46 35" stroke="#d02020" stroke-width="2.5"/><rect class="s" x="27" y="27" width="6" height="6"/><use href="#t"/></svg>
        <svg viewBox="0 0 60 60"><circle cx="23" cy="23" r="6" fill="#f0c030" stroke="#a06a20" stroke-width="2"/><rect x="33" y="22" width="12" height="11" fill="#f8d838" stroke="#a06a20" stroke-width="2"/><path d="M28 36 34 46H22Z" fill="#fff" stroke="#a06a20" stroke-width="2"/><path d="M46 9H52V15M9 44V50H15" fill="none" stroke="#333" stroke-width="1.5"/><use href="#t"/></svg>
        <svg viewBox="0 0 60 60"><path d="M16 21C16 12 23 8 30 8S44 12 44 21C44 28 38 32 37 38H23C22 32 16 28 16 21Z" fill="url(#gLight)" stroke="#333" stroke-width="2"/><rect x="24" y="38" width="12" height="6" rx="2" fill="#777" stroke="#333"/><use href="#t"/></svg>

        <svg viewBox="0 0 60 60"><path class="k k3" d="M22 26V18C22 10 38 10 38 18V26" stroke="#333"/><rect x="14" y="25" width="31" height="21" rx="3" fill="url(#gLight)" stroke="#222" stroke-width="2"/><path d="M19 31H40M19 36H40M19 41H40" stroke="#999"/><use href="#t"/></svg>
        <svg viewBox="0 0 60 60"><path d="M8 14 46 21 45 32 33 45 8 34Z" fill="#2a3fb0" stroke="#000" stroke-width="2"/><path d="M9 15 46 21 45 27 33 31 9 22Z" fill="#f08a68"/><path d="M9 22 33 31 45 27V32L33 38 9 28Z" fill="#fff"/><path d="M9 28 33 38 45 32 33 41 9 32Z" fill="#d82020"/><use href="#t"/></svg>
        <svg viewBox="0 0 60 60"><ellipse cx="30" cy="29" rx="19" ry="18" fill="#111"/><g fill="none" stroke-width="8"><path d="M30 17A12 12 0 0 1 41 23" stroke="#f6e020"/><path d="M41 23A12 12 0 0 1 41 36" stroke="#3ce030"/><path d="M41 36A12 12 0 0 1 30 41" stroke="#20d8e0"/><path d="M30 41A12 12 0 0 1 19 36" stroke="#2040f0"/><path d="M19 36A12 12 0 0 1 19 23" stroke="#d020e0"/><path d="M19 23A12 12 0 0 1 30 17" stroke="#f02828"/></g><use href="#t"/></svg>
        <svg viewBox="0 0 60 60"><ellipse cx="30" cy="30" rx="18" ry="17" fill="url(#gGlobe)" stroke="#222" stroke-width="2"/><path d="M12 30C20 36 40 36 48 30M30 13C25 22 25 38 30 47" stroke="#222" stroke-width="2" fill="none"/></svg>
        <svg viewBox="0 0 60 60"><path d="M4 10H56M4 20H56M4 30H56M4 40H56M4 50H56M8 5V55M18 5V55M28 5V55M38 5V55M48 5V55" stroke="#999" stroke-width="1"/><ellipse cx="30" cy="30" rx="17" ry="16" fill="url(#gGlobe)" stroke="#222" stroke-width="2"/><path d="M13 30C20 36 40 36 47 30M30 14C26 22 26 38 30 46" stroke="#222" stroke-width="2" fill="none"/><use href="#t"/></svg>

        <svg viewBox="0 0 60 60"><ellipse cx="30" cy="30" rx="18" ry="17" fill="url(#gBall)"/><use href="#t"/></svg>
        <svg viewBox="0 0 60 60"><path d="M19 22 45 12 40 36Z" fill="url(#gOrange)" stroke="#333" stroke-width="1.5"/><ellipse cx="28" cy="28" rx="10" ry="6" fill="#fff4cc" stroke="#333" transform="rotate(35 28 28)"/><use href="#t"/></svg>
        <svg viewBox="0 0 60 60"><path d="M9 11H38M9 36H32M26 36V54M30 50H47M47 40V50M9 11V36" fill="none" stroke="#000" stroke-width="1.5"/><path d="M16 14V30M13 18 16 14 19 18M13 26 16 30 19 26" fill="none" stroke="#000" stroke-width="2"/><rect class="s" x="37" y="9" width="6" height="5"/><rect class="s" x="29" y="34" width="6" height="5"/><rect class="s" x="44" y="34" width="6" height="5"/><use href="#t"/></svg>
      </div>
      <div class="snaps">
        <label class="snap"><i class="radio on"></i>Persistent</label>
        <label class="snap snap-grp"><i class="radio"></i>One shot</label>
        <label class="snap"><i class="chk on"></i>End</label>
        <label class="snap"><i class="chk on"></i>Near</label>
        <label class="snap"><i class="chk"></i>Point</label>
        <label class="snap"><i class="chk"></i>Midpoint</label>
        <label class="snap"><i class="chk"></i>Center</label>
        <label class="snap"><i class="chk"></i>Intersection</label>
        <label class="snap"><i class="chk"></i>Perpendicular</label>
        <label class="snap"><i class="chk"></i>Tangent</label>
        <label class="snap"><i class="chk"></i>Quadrant</label>
        <label class="snap"><i class="chk"></i>Knot</label>
        <label class="snap"><i class="chk"></i>Vertex</label>
        <label class="snap off"><i class="chk"></i>On curve</label>
        <label class="snap off"><i class="chk"></i>On surface</label>
        <label class="snap off"><i class="chk"></i>On polysurface</label>
        <label class="snap off"><i class="chk"></i>On mesh</label>
        <label class="snap"><i class="chk"></i>Project</label>
        <label class="snap snap-last"><i class="chk on"></i>SmartTrack</label>
        <label class="snap"><i class="chk"></i>Disable all</label>
      </div>
    </aside>
    <section class="viewport">
      <svg class="scene" viewBox="2593 130 1247 2214">
        <path d="M2594 1130H3000V1300L2834 1353 2594 1480Z" fill="url(#gridMinor)"/>
        <path d="M2594 1130H3000V1300L2834 1353 2594 1480Z" fill="url(#gridMajor)"/>
        <g transform="translate(2590 400) scale(.7974 .6378)" class="s3d sy">
          <polygon fill="#a08745" points="965,478 1356,658 388,1245 20,1060 5,1075 5,960"/>
          <polygon fill="#8f7a45" points="388,1245 408,1580 45,1270 20,1060"/>
          <polygon fill="#c0a65c" points="1356,658 1332,950 408,1580 388,1245"/>
          <polygon class="ns" fill="url(#gridOver)" points="135,1050 900,860 1130,960 700,1290 300,1450 60,1260"/>
          <path class="ln" d="M965 478 960 755M960 755 1332 950M960 755 45 1270"/>
          <polygon fill="#a8914f" points="636,47 975,180 5,585 5,265"/>
          <polygon class="ns" fill="#9d8340" points="5,290 400,270 520,250 640,150 760,100 975,180 640,320 450,390 300,345 5,430"/>
          <polygon class="ns" fill="#a8914f" points="60,265 150,225 290,240 280,268 50,290"/>
          <polygon class="ns" fill="#a8914f" points="405,180 470,165 520,175 490,195 420,195"/>
          <polygon class="ns" fill="#a8914f" points="270,320 500,295 530,310 450,385 380,420 305,345"/>
          <polygon class="ns" fill="#987e3c" points="5,430 300,345 310,440 5,580"/>
          <path class="ln fa" d="M636 47 640 320"/>
          <polygon fill="#d0ae55" points="975,180 965,478 5,960 5,585"/>
          <polygon class="ns" fill="#c4a75c" points="575,445 640,430 720,460 910,460 830,510 680,560 620,530 580,500"/>
          <polygon class="ns" fill="#bda25f" points="850,350 900,310 935,320 930,345 970,365 900,380 860,370"/>
          <polygon class="ns" fill="#d6b355" points="210,570 420,500 610,500 630,570 500,620 300,590"/>
          <polygon class="ns" fill="#c9a84e" points="220,650 280,620 300,640 260,690 210,690"/>
          <polygon class="ns" fill="#bfa450" points="375,620 415,585 450,625 410,655"/>
          <polygon class="ns" fill="#a98c3f" points="5,840 520,605 560,680 5,960"/>
          <path class="ln fa" d="M300 425 580 420 575 600M395 430V490M460 490V600"/>
          <polygon fill="#b49435" points="28,950 130,930 135,1055 40,1055"/>
          <polygon fill="#7a6524" points="130,930 148,895 138,1040"/>
          <polygon fill="#d8b24f" points="145,900 225,855 228,940 140,1040"/>
          <path fill="url(#cyl3)" d="M195 770C220 775 250 775 270 765L275 865C250 872 225 870 200 855Z"/>
          <polygon fill="#8f7630" points="275,770 330,800 335,895 280,860"/>
          <polygon fill="#dcb95e" points="330,800 400,765 405,860 335,898"/>
          <polygon fill="#b69838" points="403,765 498,765 498,860 405,860"/>
          <polygon fill="#d8b655" points="500,735 565,685 568,775 502,812"/>
          <polygon fill="#6d5a20" points="495,740 505,735 500,810"/>
          <path fill="#8a7230" d="M435 650C470 645 500 620 530 610V680L435 700Z"/>
          <path fill="url(#cyl3)" d="M632 685C665 695 690 695 715 685V780C690 790 665 785 640 770Z"/>
          <polygon fill="#a78d45" points="715,685 775,715 775,805 715,780"/>
          <polygon fill="#d0b560" points="775,715 832,685 832,775 775,805"/>
          <polygon fill="#b69c50" points="832,685 915,685 915,735 860,770 832,775"/>
          <polygon fill="#a89044" points="860,770 915,735 918,920 835,940 832,840"/>
          <polygon fill="#d7b95f" points="625,795 688,765 688,845 625,845"/>
          <polygon fill="#b0964e" points="620,845 708,845 708,940 620,940"/>
          <polygon fill="#ae9548" points="708,845 770,810 770,905 708,940"/>
          <polygon fill="#9c8440" points="770,810 835,855 835,940 770,905"/>
          <polygon fill="#c9ad60" points="375,870 445,865 448,925 382,960"/>
          <polygon fill="#8a7532" points="445,865 505,890 510,960 448,925"/>
          <path fill="url(#cyl3)" d="M505 865C540 850 595 860 605 900 608 930 605 950 605 975 575 950 540 955 510 965Z"/>
          <polygon fill="#d8bb66" points="205,965 278,920 280,1020 205,1040"/>
          <polygon fill="#a48a40" points="285,865 375,870 382,960 288,965"/>
          <polygon fill="#a08642" points="580,1000 650,960 650,1060 580,1095"/>
          <path fill="url(#cyl3)" d="M230 1040C260 1070 310 1070 340 1060V1160C310 1170 260 1170 240 1150Z"/>
          <polygon fill="#a4893d" points="340,1060 400,1105 405,1205 340,1160"/>
          <polygon fill="#ab9145" points="400,1105 475,1060 478,1160 405,1205"/>
          <polygon fill="#a4883d" points="475,1060 577,1060 577,1160 478,1160"/>
          <ellipse class="ln" cx="545" cy="993" rx="62" ry="40"/>
          <path class="ln" d="M280 965H510M290 965 478 1060M580 1000 405 1105M140 790 190 765 180 745M185 765 145 760M510 600 530 650M480 605 525 610"/>
        </g>
        <g transform="translate(2590 1120) scale(.7974 .7908)" class="s3d sg">
          <polygon fill="#6c963e" points="1308,28 1568,148 1568,590 598,1385 5,830 5,808"/>
          <polygon fill="#5f8a37" points="1308,28 1282,295 1568,445 1568,148"/>
          <polygon class="ns" fill="#628e38" points="1282,295 1568,445 1568,590 598,1385 205,1018"/>
          <polygon fill="#5b8135" points="5,830 598,1385 606,1548 465,1548 50,1125 5,890"/>
          <polygon fill="#7aae49" points="598,1385 1568,590 1568,845 785,1548 606,1548"/>
          <path class="ln" d="M1282 295 50 1125M1282 295 1568 445"/>
          <polygon fill="#628e38" points="413,756 857,758 860,1015 712,1015 602,1098 500,1015 378,998 350,885"/>
          <polygon fill="#80b84f" points="280,825 390,755 400,848 350,885"/>
          <polygon fill="#5f8a37" points="390,755 404,660 413,750 398,848"/>
          <polygon fill="#6ba33f" points="404,660 538,660 542,756 413,756"/>
          <polygon fill="#82b851" points="538,660 636,598 638,694 542,756"/>
          <polygon fill="#64913a" points="636,598 725,660 725,755 638,694"/>
          <path fill="url(#cyl1)" d="M725 660C755 635 835 635 870 680 890 705 885 740 857 760L725 757Z"/>
          <ellipse class="ln" cx="790" cy="807" rx="94" ry="68"/>
          <polygon fill="#6c9a3c" points="857,760 960,828 885,878 857,850"/>
          <polygon fill="#75a240" points="885,878 960,828 957,925 860,1000 860,905"/>
          <polygon fill="#6a932f" points="712,1015 860,1015 860,1115 712,1115"/>
          <polygon fill="#6f9a37" points="602,1098 712,1015 712,1115 605,1198"/>
          <polygon fill="#678f33" points="500,1015 602,1098 605,1198 507,1112"/>
          <path fill="#6b9737" d="M352 1015C400 1040 465 1040 500 1015L507 1112H360Z"/>
          <polygon fill="#6e9a3d" points="280,825 350,885 368,900 292,920"/>
          <path fill="#72a044" d="M368 902C320 930 320 990 352 1015L378 998Z"/>
          <ellipse class="ln" cx="440" cy="1057" rx="103" ry="80"/>
          <path class="ln" d="M413 756 378 998 360 1112M542 756 50 1125M725 757 858 855M378 998 507 1112M857 760V1015M600 756H857"/>
          <path fill="url(#cyl2)" d="M885 350C920 370 970 370 1003 350L1000 440C960 465 920 450 888 422Z"/>
          <path fill="#6ca343" d="M885 350C920 380 920 400 888 422L885 515C920 490 920 460 888 425Z"/>
          <polygon fill="#67953a" points="1003,350 1092,402 1088,492 1000,440"/>
          <polygon fill="#7db54c" points="1092,402 1170,350 1163,442 1088,492"/>
          <polygon fill="#659e3a" points="1170,350 1285,350 1278,442 1163,442"/>
          <polygon fill="#5a6f3a" points="1285,350 1300,428 1278,442"/>
          <polygon fill="#6a9a3d" points="1300,428 1290,518 1225,480"/>
          <polygon fill="#6f9a3d" points="1225,480 1290,518 1215,572"/>
          <polygon fill="#66913a" points="1290,518 1323,540 1305,575 1315,630 1215,572"/>
          <path fill="#6d9a38" d="M1210 622C1250 600 1300 600 1340 625L1328 718C1290 695 1240 695 1200 718Z"/>
          <polygon fill="#66902f" points="1110,562 1210,622 1200,718 1104,657"/>
          <polygon fill="#6e9a38" points="1025,622 1110,562 1104,657 1020,718"/>
          <polygon fill="#6a912f" points="892,622 1025,622 1020,718 890,716"/>
          <polygon fill="#7db54c" points="892,535 975,480 972,572 893,622"/>
          <polygon fill="#6ea041" points="885,422 975,480 892,535 885,515"/>
          <path class="ln" d="M892 535V622M1340 625 1305 575M1305 575C1290 640 1300 680 1320 690"/>
        </g>
        <g class="axes">
          <path d="M2666 2271V2223M2666 2271 2708 2249M2666 2271 2626 2251M2626 2251 2634 2247"/>
          <text x="2670" y="2221">z</text><text x="2709" y="2252">x</text><text x="2625" y="2246">y</text>
        </g>
      </svg>
      <div class="vp-label">Perspective</div>
    </section>
  </div>
  <footer class="status">
    <svg class="hamb" viewBox="0 0 28 20" width="28" height="20"><path d="M0 1.5H28M0 7.5H28M0 13.5H28M0 19H28" stroke="#666" stroke-width="3"/></svg>
    <span class="st-cmd">Command: '_Cut</span>
    <span class="st-mm">Millimeters</span>
    <span class="st-sel">CPlane<svg viewBox="0 0 12 28" width="12" height="28"><path d="M1 10 6 2 11 10M1 18 6 26 11 18" fill="none" stroke="#aaa" stroke-width="1.5"/></svg></span>
    <span class="st-x">X: -101.355</span><span class="st-y">Y: -65.502</span><span class="st-z">Z: 0.000</span>
  </footer>
</div>
</body>
</html>
```
FILE: styles.css
```css
* { box-sizing: border-box; }
html, body { margin: 0; padding: 0; }
body { width: 3840px; height: 2400px; display: flex; overflow: hidden; font-family: "Liberation Sans", Arial, sans-serif; background: #fff; }
.defs { position: absolute; }
svg { display: block; }
button { padding: 0; font: inherit; }

/* Grasshopper */
.gh { width: 2247px; height: 2400px; display: flex; flex-direction: column; border-left: 3px solid #c8c8c8; overflow: hidden; }
.gh-tabs { height: 45px; display: flex; align-items: flex-end; border-bottom: 3px solid #a8a8a8; border-top-right-radius: 10px; margin-left: -3px; }
.gh-tab { font-size: 23px; color: #7b796e; padding: 0 0 4px 0; margin-right: 26px; line-height: 27px; }
.gh-tab-on { color: #111; background: linear-gradient(#fff, #fff 60%, #ececec); border: 2px solid #aaa; border-bottom: 0; border-radius: 9px 12px 0 0; padding: 5px 11px 3px 10px; height: 43px; margin-right: 10px; margin-bottom: -3px; }
.ribbon { height: 120px; display: flex; gap: 8px; padding: 5px 0 0 3px; align-items: flex-start; background: linear-gradient(#fff, #fff 70%, #f3f3f3); border-bottom: 3px solid #bdbdbd; }
.panel { height: 90px; border-radius: 10px; background: #eee; border: 2px solid #777; border-top: 3px solid #8a8a8a; display: flex; flex-direction: column; overflow: hidden; box-shadow: 0 2px 1px #ccc; }
.p-geo { width: 720px; }
.p-pri { width: 364px; }
.p-inp { width: 722px; }
.p-uti { width: 383px; }
.panel-icons { height: 58px; display: flex; align-items: center; padding-left: 1px; background: linear-gradient(#e6e6e6, #f4f4f4 30%, #f2f2f2); }
.pi { width: 48px; height: 42px; margin: 0 4.5px; flex: none; }
.pi-q { height: 46px; }
.pgap { width: 18px; flex: none; align-self: stretch; background: linear-gradient(90deg, transparent 8px, #ddd 8px, #ddd 10px, transparent 10px); }
.panel-title { flex: 1; margin: 0; padding-right: 22px; background: linear-gradient(#2e2e2e, #111); color: #fff; font-size: 20px; font-weight: 400; text-align: center; line-height: 27px; position: relative; }
.more { position: absolute; right: 5px; top: 6px; width: 10px; height: 18px; }
.hx-t { fill: #eee; font-family: "Liberation Serif", serif; text-anchor: middle; }
.cal-m { fill: #ddd; font-size: 13px; text-anchor: middle; }
.cal-d { fill: #eee; font-size: 28px; font-weight: 700; text-anchor: middle; }

.canvas-bar { height: 61px; display: flex; align-items: flex-start; padding: 9px 0 0 4px; background: #fff; }
.tb-btn { width: 65px; height: 39px; border: 1px solid #d4d4d4; border-bottom: 2px solid #c4c4c4; border-radius: 6px; background: #fff; margin-right: 11px; display: flex; align-items: center; justify-content: center; flex: none; }
.tb-btn svg { width: 50px; height: 33px; }
.tb-on { background: #97979f; }
.tb-sep { width: 1px; height: 36px; background: #ddd; margin: 1px 10px 0 -1px; flex: none; }
.tb-sep-l { margin: 1px 6px 0 -2px; }
.zoom-sel { width: 132px; height: 40px; display: flex; margin: -1px 13px 0 0; border: 1px solid #ccc; border-radius: 0 6px 6px 0; flex: none; }
.zoom-val { flex: 1; font-size: 20px; padding: 2px 0 0 6px; color: #222; }
.zoom-arrow { width: 33px; background: #a5a5ab; border-radius: 0 6px 6px 0; display: flex; align-items: center; justify-content: center; }
.tb-right { margin-left: auto; display: flex; }
.tb-right .tb-btn:last-child { margin-right: 7px; }

.canvas { position: relative; height: 2128px; flex: none; overflow: hidden; margin-left: -3px; background: linear-gradient(#c5b7eb 1396px, #a99dc8 1396px, #a99dc8 1399px, #dcd9d2 1399px); }
.wires { position: absolute; left: 0; top: 0; width: 2247px; height: 2128px; }
.gridl path { stroke: rgba(50, 40, 70, .09); stroke-width: 5; fill: none; }
.diag { stroke: rgba(50, 50, 50, .2); stroke-width: 5; fill: none; }
.wire path { stroke: #4a4560; stroke-width: 11; fill: none; }
.wire .thick { stroke-width: 12; }
.wire .thin { stroke-width: 8; }

.node { position: absolute; display: flex; border: 3px solid #3a3a3a; border-radius: 12px; box-shadow: 0 0 0 3px rgba(255, 255, 255, .45); background: linear-gradient(#f7f7f7, #e3e3e3 30px, #dedede 30px, #c8c8c8); font-size: 33px; color: #111; }
.node.dark { background: linear-gradient(#eaeaee, #c8c8cf 30px, #aeacbb 30px, #8b8999); }
.move { width: 481px; height: 182px; }
.vec { width: 481px; height: 264px; }
.pi-node { width: 377px; height: 118px; }
.mult { width: 298px; height: 282px; }
.n-move1 { left: -23px; top: 221px; }
.n-vec1 { left: -72px; top: 469px; }
.n-move2 { left: 1445px; top: 301px; }
.n-vec2 { left: 1397px; top: 549px; }
.n-pi { left: 16px; top: 1091px; }
.n-mult { left: 540px; top: 1075px; }
.col-in, .col-out { display: flex; flex-direction: column; padding: 6px 0; }
.col-in { text-align: right; padding-right: 13px; }
.col-move { width: 181px; }
.col-vec { width: 229px; }
.col-pi { width: 124px; }
.col-mult { width: 54px; padding-right: 12px; }
.col-out { flex: 1; padding-left: 8px; }
.row { flex: 1; display: flex; align-items: center; position: relative; white-space: nowrap; }
.col-in .row { justify-content: flex-end; }
.pill { flex: none; width: 101px; margin: 5px 0; border: 4px solid #000; border-radius: 14px; background: linear-gradient(#c4c4c4, #6e6e6e 24px, #4a4a4a 24px, #333); box-shadow: 0 0 0 2px rgba(255, 255, 255, .7); display: flex; align-items: center; justify-content: center; }
.pill span { writing-mode: vertical-rl; transform: rotate(180deg); color: #fff; font-size: 41px; line-height: 1; white-space: nowrap; -webkit-text-stroke: .6px #fff; }
.port { position: absolute; top: 50%; width: 19px; height: 42px; margin-top: -21px; background: #fff; border: 7px solid #000; }
.port-l { border-right: 0; border-radius: 19px 0 0 19px / 21px 0 0 21px; right: calc(100% + 3px); }
.port-r { right: -22px; border-left: 0; border-radius: 0 19px 19px 0 / 0 21px 21px 0; }

.slider { position: absolute; height: 85px; display: flex; border: 3px solid #3a3a3a; border-radius: 10px; box-shadow: 0 0 0 3px rgba(255, 255, 255, .45); font-size: 33px; color: #111; }
.n-s1 { left: 585px; top: 708px; width: 748px; }
.n-s2 { left: 539px; top: 857px; width: 749px; }
.n-s3 { left: -332px; top: 1252px; width: 748px; }
.s-label { width: 250px; flex: none; padding-left: 18px; display: flex; align-items: center; white-space: nowrap; background: linear-gradient(#e2e2e2, #bcbcbc 20px, #a1a0ad 20px, #8d8b99); border-radius: 7px 0 0 7px; border-right: 3px solid #3a3a3a; box-shadow: 2px 0 0 #eee; }
.s-track { flex: 1; position: relative; background: linear-gradient(#f7f7f7, #e5e5e5 20px, #dedede 20px, #cfcfcf); border-radius: 0 7px 7px 0; }
.s-rail { position: absolute; left: 42px; right: 39px; top: 17px; height: 26px; border-bottom: 6px solid #b2b2b2; border-left: 3px solid #aaa; border-right: 3px solid #aaa; background: repeating-linear-gradient(90deg, transparent 0 38.5px, #b5b5b5 38.5px 41.7px) 0 8px / 100% 18px no-repeat; }
.s-read { position: absolute; top: 50%; transform: translateY(-52%); display: flex; align-items: center; gap: 12px; font-size: 47px; line-height: 1; white-space: nowrap; }
.r1 { left: 147px; }
.r2 { left: 108px; }
.r3 { left: 260px; }
.knob { width: 34px; height: 36px; border-radius: 50%; background: #fff; border: 10px solid #000; flex: none; }

.widget { position: absolute; left: 3px; bottom: 0; width: 237px; height: 56px; border: 3px solid #000; border-left: 0; background: linear-gradient(#f4f4f4, #d8d8d8 20px, #b4b4b4 24px, #9a9a9a); display: flex; align-items: center; padding-left: 10px; }
.w-x { width: 35px; height: 36px; background: #fafafa; border: 2px solid #888; border-radius: 4px; display: flex; align-items: center; justify-content: center; flex: none; }
.w-i { width: 40px; height: 40px; margin-left: 15px; flex: none; }
.w-first { margin-left: 20px; }
.w-e { font-family: "Liberation Serif", serif; font-style: italic; font-size: 46px; fill: #111; text-anchor: middle; }
.w-end { position: absolute; right: 0; top: 0; bottom: 0; width: 12px; background: linear-gradient(#ddd, #ccc 20px, #999 20px); }
.dial { position: absolute; left: 2137px; top: 2021px; width: 96px; height: 96px; }
.gh-foot { height: 46px; background: #fff; border-top: 3px solid #c8c8c8; margin-left: -3px; }

.divider { width: 25px; height: 2400px; background: #000; display: flex; align-items: center; justify-content: center; flex: none; }
.handle { width: 8px; height: 122px; border-radius: 4px; background: #8a8a8a; }

/* Rhino */
.rh { flex: 1; display: flex; flex-direction: column; height: 2400px; background: #ebebeb; min-width: 0; }
.rh-top { height: 77px; background: #f5f5f5; display: flex; align-items: center; gap: 20px; padding-left: 28px; border-bottom: 2px solid #d4d4d4; }
.side-tog { width: 39px; height: 39px; border: 4px solid #d9d9d9; border-left-width: 9px; border-bottom-width: 5px; margin-top: 4px; }
.tg { font-size: 25px; font-weight: 700; color: #cfcfcf; padding: 0 22px; height: 31px; line-height: 32px; white-space: nowrap; margin-top: 4px; border-radius: 7px; }
.tg-first { margin-left: 89px; }
.tg-on { background: #c4c4c4; color: #adadad; }
.tg-next { margin-left: -1px; }
.rh-top-right { margin-left: auto; display: flex; align-items: center; gap: 25px; padding-right: 10px; margin-top: 4px; }
.rh-row { height: 53px; display: flex; }
.rh-row-side { width: 321px; background: linear-gradient(#f4f4f4, #e0e0e0); border-bottom: 3px solid #c4c4c4; border-right: 2px solid #8a8a8a; }
.vp-tabs { flex: 1; display: flex; align-items: center; padding: 3px 0 0 16px; background: linear-gradient(#f6f6f6, #dedede); border-bottom: 3px solid #707070; }
.vt-ic { margin-right: 23px; }
.vt { font-size: 27px; color: #a3a3a3; border-left: 1px solid #555; height: 28px; line-height: 28px; padding: 0 41px 0 38px; white-space: nowrap; }
.vt-lay { margin-left: auto; font-size: 25px; color: #a3a3a3; padding-right: 25px; }
.rh-main { flex: 1; display: flex; min-height: 0; }
.side { width: 321px; flex: none; background: #ebebeb; border-right: 2px solid #808080; padding-top: 21px; display: flex; flex-direction: column; }
.cmd { margin: 0 18px; height: 41px; background: #fff; border: 1px solid #cfcfcf; border-bottom: 2px solid #ccc; font-size: 26px; color: #bdbdbd; line-height: 42px; padding-left: 6px; }
.tools { height: 1026px; margin-top: 18px; display: grid; grid-template-columns: repeat(5, 60px); grid-auto-rows: 60px; align-content: start; }
.tools svg { width: 60px; height: 60px; }
.w { fill: #fff; stroke: #000; stroke-width: 2; }
.k { fill: none; stroke: #000; stroke-width: 2; }
.k1 { stroke-width: 1.5; }
.k3 { stroke-width: 4; }
.s { fill: #fff; stroke: #000; stroke-width: 1.5; }
.b { fill: #5b78e6; stroke: #000; stroke-width: 2; }
.arr rect { fill: #7e96ec; stroke: #000; stroke-width: 2; }
.arr .wf { fill: #fff; }
.ic-t { font-family: "Liberation Serif", serif; font-weight: 700; font-size: 52px; fill: #5b78e6; stroke: #000; stroke-width: 1.5; text-anchor: middle; }

.snaps { flex: 1; border-top: 3px solid #7c7c7c; padding-top: 11px; }
.snap { height: 36px; display: flex; align-items: center; font-size: 23px; letter-spacing: .3px; color: #222; padding-left: 39px; }
.snap-grp { margin-bottom: 10px; }
.snap-last { margin-bottom: 36px; }
.snap.off { color: #b9b9b9; }
.chk { width: 24px; height: 23px; border: 1px solid #adadad; border-radius: 5px; background: #fff; margin-right: 11px; flex: none; position: relative; }
.radio { width: 28px; height: 26px; border: 1px solid #b0b0b0; border-radius: 50%; background: #fff; margin: 0 9px 0 -2px; flex: none; position: relative; }
.off .chk { background: #f4f4f4; border-color: #d0d0d0; }
.radio.on::after { content: ""; position: absolute; left: 9px; top: 8px; width: 8px; height: 8px; border-radius: 50%; background: #333; }
.chk.on::after { content: ""; position: absolute; left: 7px; top: 3px; width: 7px; height: 11px; border: solid #333; border-width: 0 2.5px 2.5px 0; transform: rotate(40deg); }

.viewport { flex: 1; position: relative; background: #9ca1a9; overflow: hidden; min-width: 0; }
.scene { position: absolute; left: 0; top: 0; width: 1247px; height: 2214px; }
.s3d polygon, .s3d path, .s3d ellipse { vector-effect: non-scaling-stroke; stroke-width: 2; stroke-linejoin: round; }
.sy polygon, .sy path, .sy ellipse { stroke: #b8952f; }
.sg polygon, .sg path, .sg ellipse { stroke: #09a012; }
.sy .ns, .sg .ns { stroke: none; }
.sy .fa { stroke-opacity: .5; }
.ln { fill: none; }
.axes path { stroke: #666; stroke-width: 1.5; fill: none; }
.axes text { font-size: 22px; fill: #666; }
.vp-label { position: absolute; left: 3px; top: 2px; width: 160px; height: 39px; background: #80848a; color: #fff; font-size: 25px; font-weight: 700; line-height: 38px; text-align: center; }

.status { height: 56px; background: #d6d6d6; display: flex; align-items: center; font-size: 24px; color: #111; padding: 3px 0 0 9px; }
.hamb { margin-right: 5px; }
.st-cmd { white-space: nowrap; }
.st-mm { margin-left: 327px; }
.st-sel { margin-left: 33px; width: 140px; height: 32px; border: 2px solid #bbb; border-radius: 7px; color: #a8a8a8; display: flex; align-items: center; justify-content: space-between; padding: 0 10px; }
.st-x, .st-y, .st-z { font-size: 22px; white-space: nowrap; }
.st-x { margin-left: 29px; }
.st-y { margin-left: 47px; }
.st-z { margin-left: 66px; }
```
